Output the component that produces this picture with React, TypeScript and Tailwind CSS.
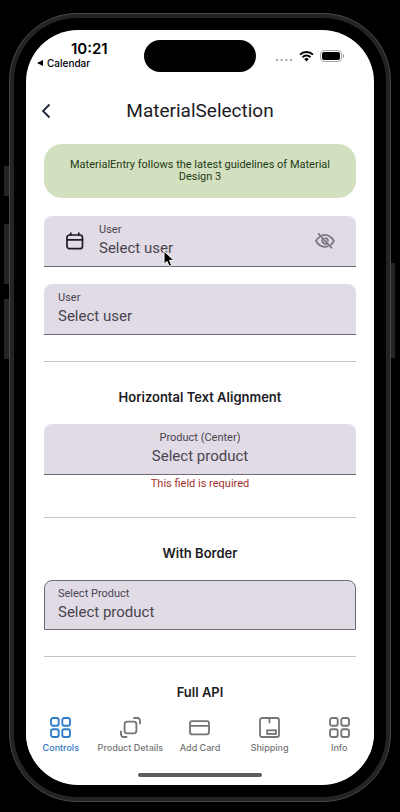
import { useState } from "react";
import type { ReactNode } from "react";
import clsx from "clsx";

function StatusBar() {
  return (
    <div className="grid h-[53px] shrink-0 grid-cols-[1fr_112px_1fr] pt-[10px] text-black">
      <div className="flex flex-col pl-[11px]">
        <span className="pl-[34px] text-[15px] font-semibold leading-[18px]">10:21</span>
        <button type="button" className="flex items-center gap-1 text-[10px] font-medium leading-[10px]">
          <svg width="6" height="6" viewBox="0 0 6 6" aria-hidden="true">
            <path d="M6 0v6L0 3z" fill="currentColor" />
          </svg>
          Calendar
        </button>
      </div>
      <div className="h-8 rounded-full bg-black" />
      <div className="flex h-8 items-center gap-[6px] pl-[19px]">
        <svg width="18" height="4" viewBox="0 0 18 4" className="mt-2" aria-hidden="true">
          <g fill="#b5b5b5">
            <circle cx="2" cy="2" r="1.3" />
            <circle cx="6.7" cy="2" r="1.3" />
            <circle cx="11.4" cy="2" r="1.3" />
            <circle cx="16" cy="2" r="1.3" />
          </g>
        </svg>
        <svg width="15" height="12" viewBox="0 0 15 12" aria-hidden="true">
          <g fill="none" stroke="#000" strokeWidth="2">
            <path d="M1 4.6a9.2 9.2 0 0 1 13 0" />
            <path d="M3.5 7.2a5.7 5.7 0 0 1 8 0" />
          </g>
          <path d="M5.2 9.1a3.3 3.3 0 0 1 4.6 0L7.5 11.5z" fill="#000" />
        </svg>
        <svg width="25" height="12" viewBox="0 0 25 12" aria-hidden="true">
          <rect x="0.5" y="0.5" width="21" height="11" rx="3.5" fill="none" stroke="#a3a3a3" />
          <rect x="2" y="2" width="18" height="8" rx="2" fill="#000" />
          <path d="M23 4v4c1.600-.5 1.600-3.500 0-4z" fill="#8a8a8a" />
        </svg>
      </div>
    </div>
  );
}

function CalendarIcon() {
  return (
    <svg width="18" height="18" viewBox="0 0 18 18" fill="none" stroke="#1d1b20" strokeWidth="1.700" strokeLinecap="round" aria-hidden="true">
      <rect x="1" y="3" width="15.500" height="13.700" rx="2.500" />
      <path d="M1 7.800h15.500M4.700 1v2M12.800 1v2" />
    </svg>
  );
}

function EyeOffIcon() {
  return (
    <svg width="20" height="16" viewBox="0 0 20 16" fill="none" stroke="#79747e" strokeWidth="1.700" strokeLinecap="round" aria-hidden="true">
      <path d="M7.200 2.300c5-1.300 9 1 11.700 5.700-.7 1.400-1.700 2.600-2.900 3.500" />
      <path d="M12.700 13.400C7.800 14.700 3.700 12.600 1 8c.8-1.600 2-3 3.500-4" />
      <path d="M8 5.700a3.100 3.100 0 0 0 4.200 4.500M10.400 5.100a3 3 0 0 1 2.600 2.800" />
      <path d="M3.600 .8l13 14" />
    </svg>
  );
}

function Pointer() {
  return (
    <svg width="13" height="18" viewBox="0 0 13 18" className="absolute left-[119px] top-[34px]" aria-hidden="true">
      <path d="M1 1v13.200l3-2.800 2.200 5 2.500-1.100-2.200-4.900H11z" fill="#000" stroke="#fff" strokeWidth="1" strokeLinejoin="round" />
    </svg>
  );
}

type FieldProps = {
  id: string;
  label: string;
  placeholder: string;
  centered?: boolean;
  bordered?: boolean;
  leading?: ReactNode;
  trailing?: ReactNode;
  children?: ReactNode;
};

function SelectionField({ id, label, placeholder, centered, bordered, leading, trailing, children }: FieldProps) {
  return (
    <div
      className={clsx(
        "relative flex items-center rounded-t-lg bg-[#e1dbe6] font-[Roboto,'Liberation_Sans',sans-serif] text-[#49454f]",
        bordered ? "h-[50px] border border-[#6f6a78] px-[13px]" : "h-[51px] border-b border-[#6f6a78] px-[14px]",
      )}
    >
      {leading && <div className="w-[41px] shrink-0 pl-2">{leading}</div>}
      <div className={clsx("flex min-w-0 flex-1 flex-col", centered && "text-center")}>
        <label htmlFor={id} className="text-[11px] leading-[14px]">
          {label}
        </label>
        <select
          id={id}
          className={clsx(
            "h-[22px] w-full appearance-none bg-transparent p-0 text-[15px] leading-[22px] outline-none",
            centered && "[text-align-last:center]",
          )}
        >
          <option>{placeholder}</option>
        </select>
      </div>
      {trailing}
      {children}
    </div>
  );
}

function Divider() {
  return <hr className="my-[26px] border-t border-[#c5c3ca]" />;
}

function SectionTitle({ children }: { children: ReactNode }) {
  return <h2 className="mb-[18px] text-center text-[13px] font-semibold leading-[18px] text-[#1c1b1f]">{children}</h2>;
}

function GridIcon() {
  return (
    <>
      <rect x="1" y="1" width="7.500" height="7.500" rx="2" />
      <rect x="12" y="1" width="7.500" height="7.500" rx="2" />
      <rect x="1" y="12" width="7.500" height="7.500" rx="2" />
      <rect x="12" y="12" width="7.500" height="7.500" rx="2" />
    </>
  );
}

const tabs: { name: string; icon: ReactNode }[] = [
  { name: "Controls", icon: <GridIcon /> },
  {
    name: "Product Details",
    icon: (
      <>
        <rect x="4.500" y="4.500" width="11.500" height="11.500" rx="2.500" />
        <path d="M13 1h4a2.500 2.500 0 0 1 2.500 2.500V7M1 13.500V17a2.500 2.500 0 0 0 2.500 2.500H7" />
      </>
    ),
  },
  {
    name: "Add Card",
    icon: (
      <>
        <rect x="1" y="4" width="18.500" height="13" rx="2" />
        <path d="M1 8.700h18.500" />
      </>
    ),
  },
  {
    name: "Shipping",
    icon: (
      <>
        <rect x="1" y="1" width="18.500" height="18.500" rx="2" />
        <path d="M10.200 1v5" />
        <rect x="8" y="13" width="8.500" height="3.500" />
      </>
    ),
  },
  { name: "Info", icon: <GridIcon /> },
];

function TabBar() {
  const [active, setActive] = useState("Controls");
  return (
    <nav className="grid shrink-0 grid-cols-5 bg-white pt-[3px]">
      {tabs.map((tab) => (
        <button
          key={tab.name}
          type="button"
          onClick={() => setActive(tab.name)}
          className={clsx(
            "flex flex-col items-center gap-1 whitespace-nowrap text-[9px] font-medium leading-[12px]",
            active === tab.name ? "text-[#2f7bc8]" : "text-[#757575]",
          )}
        >
          <svg width="21" height="21" viewBox="0 0 20.500 20.500" fill="none" stroke="currentColor" strokeWidth="1.800" aria-hidden="true">
            {tab.icon}
          </svg>
          {tab.name}
        </button>
      ))}
    </nav>
  );
}

export default function App() {
  return (
    <div className="h-screen bg-black px-[9px] pb-[10px] pt-[13px] font-[Inter,'Liberation_Sans',sans-serif]">
      <div className="relative h-full rounded-[68px] border border-[#484848] bg-[#242424] p-1">
        <div className="absolute -left-[6px] top-[152px] h-[30px] w-[5px] bg-[#242424]" />
        <div className="absolute -left-[6px] top-[210px] h-[60px] w-[5px] bg-[#242424]" />
        <div className="absolute -left-[6px] top-[285px] h-[60px] w-[5px] bg-[#242424]" />
        <div className="absolute -right-[5px] top-[249px] h-[95px] w-1 bg-[#242424]" />
        <div className="h-full rounded-[63px] bg-black px-3 py-3">
          <div className="flex h-full flex-col overflow-hidden rounded-[52px] bg-white">
            <StatusBar />
            <header className="grid h-14 shrink-0 grid-cols-[40px_1fr_40px] items-center text-[#1c1b1f]">
              <button type="button" aria-label="Back" className="flex justify-center">
                <svg width="10" height="16" viewBox="0 0 10 16" fill="none" stroke="#1c2738" strokeWidth="1.800" aria-hidden="true">
                  <path d="M8.500 1.500 2 8l6.500 6.500" />
                </svg>
              </button>
              <h1 className="text-center font-[Roboto,'Liberation_Sans',sans-serif] text-[19px] leading-6">MaterialSelection</h1>
            </header>
            <main className="min-h-0 flex-1 overflow-hidden px-[18px] pt-[5px]">
              <p className="mb-[18px] rounded-[18px] bg-[#d2e0c0] px-[18px] py-[15px] text-center font-[Roboto,'Liberation_Sans',sans-serif] text-[11px] leading-[12px] text-[#1f3a17]">
                MaterialEntry follows the latest guidelines of Material Design 3
              </p>
              <div className="flex flex-col gap-[17px]">
                <SelectionField
                  id="user-icons"
                  label="User"
                  placeholder="Select user"
                  leading={<CalendarIcon />}
                  trailing={
                    <button type="button" aria-label="Toggle visibility" className="mr-[7px]">
                      <EyeOffIcon />
                    </button>
                  }
                >
                  <Pointer />
                </SelectionField>
                <SelectionField id="user" label="User" placeholder="Select user" />
              </div>
              <Divider />
              <SectionTitle>Horizontal Text Alignment</SectionTitle>
              <SelectionField id="product-center" label="Product (Center)" placeholder="Select product" centered />
              <p className="mt-[2px] text-center font-[Roboto,'Liberation_Sans',sans-serif] text-[11px] leading-[14px] text-[#a3302c]">This field is required</p>
              <Divider />
              <SectionTitle>With Border</SectionTitle>
              <SelectionField id="product-border" label="Select Product" placeholder="Select product" bordered />
              <Divider />
              <SectionTitle>Full API</SectionTitle>
            </main>
            <TabBar />
            <div className="flex h-[31px] shrink-0 items-end justify-center pb-2">
              <div className="h-1 w-[124px] rounded-full bg-[#5c5c5c]" />
            </div>
          </div>
        </div>
      </div>
    </div>
  );
}
